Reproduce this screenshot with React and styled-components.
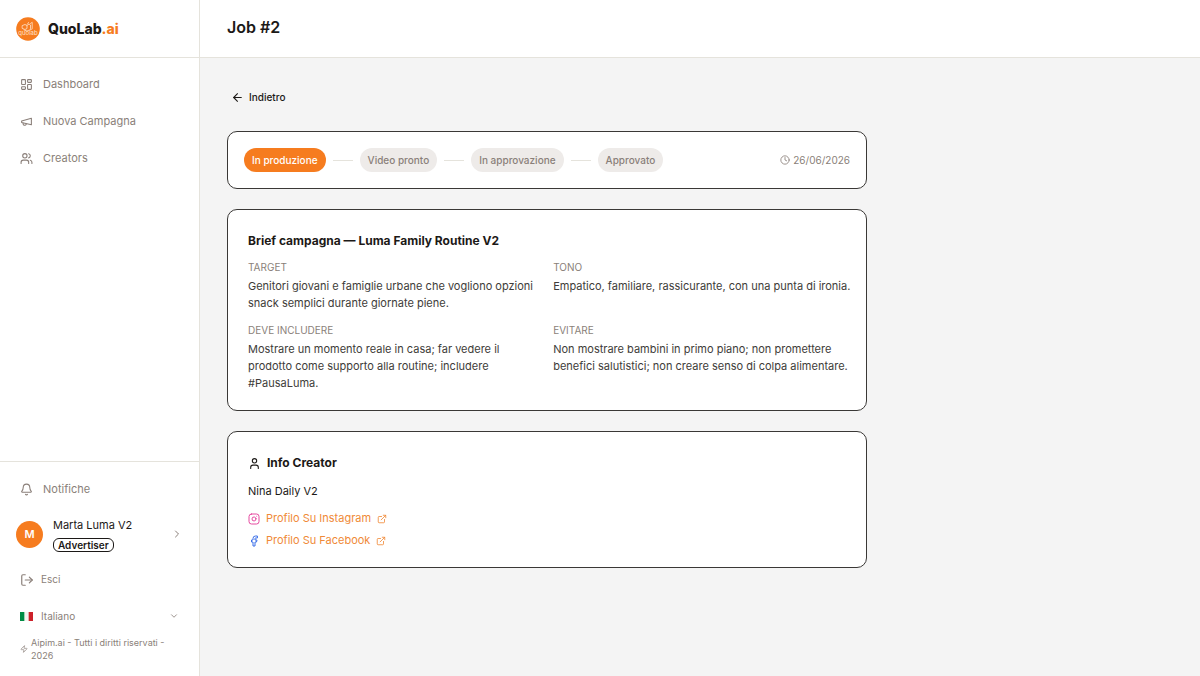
import * as React from 'react';
import styled, { createGlobalStyle } from 'styled-components';
import {
    ArrowLeft,
    Bell,
    ChevronDown,
    ChevronRight,
    Clock,
    ExternalLink,
    Facebook,
    Instagram,
    LayoutDashboard,
    LogOut,
    User,
    Users,
    Zap,
} from 'lucide-react';

const COLOR_ORANGE = '#f67c1f';
const COLOR_LINK = '#f08a38';
const COLOR_INK = '#1c1917';
const COLOR_TEXT = '#403c39';
const COLOR_MUTED = '#8a7f79';
const COLOR_LINE = '#e5e3dc';

const GlobalStyle = createGlobalStyle`
    * {
        box-sizing: border-box;
    }

    body {
        margin: 0;
        background: #f4f4f4;
        color: ${COLOR_INK};
        font-family: Inter, 'Liberation Sans', sans-serif;
        font-size: 11px;
        line-height: 17px;
    }

    h1, h2, h3, p, dl, dd, ol, ul {
        margin: 0;
        padding: 0;
    }

    button, select {
        font: inherit;
        color: inherit;
        background: none;
        border: 0;
        padding: 0;
        cursor: pointer;
    }

    a {
        color: inherit;
        text-decoration: none;
    }

    svg {
        flex: none;
    }
`;

const Page = styled.div`
    display: flex;
    min-height: 100vh;
`;

/* Sidebar */
const Sidebar = styled.aside`
    display: flex;
    flex: none;
    flex-direction: column;
    width: 200px;
    background: #fff;
    border-right: 1px solid ${COLOR_LINE};
    color: ${COLOR_MUTED};
`;

const Brand = styled.a`
    display: flex;
    align-items: center;
    gap: 8px;
    height: 58px;
    padding: 0 16px;
    border-bottom: 1px solid ${COLOR_LINE};
`;

const BrandName = styled.span`
    color: ${COLOR_INK};
    font-size: 14px;
    font-weight: 800;

    em {
        color: ${COLOR_ORANGE};
        font-style: normal;
    }
`;

const Nav = styled.nav`
    display: flex;
    flex: 1;
    flex-direction: column;
    gap: 5px;
    padding: 10px;
`;

const NavLink = styled.a`
    display: flex;
    align-items: center;
    gap: 10px;
    height: 32px;
    padding: 0 10px;
`;

const SidebarFooter = styled.div`
    display: flex;
    flex-direction: column;
    padding: 11px 10px 14px;
    border-top: 1px solid ${COLOR_LINE};
`;

const Account = styled.button`
    display: flex;
    align-items: center;
    gap: 10px;
    height: 58px;
    padding: 0 6px;
    text-align: left;
`;

const Avatar = styled.span`
    display: grid;
    flex: none;
    place-items: center;
    width: 27px;
    height: 27px;
    border-radius: 50%;
    background: ${COLOR_ORANGE};
    color: #fff;
    font-weight: 600;
`;

const AccountText = styled.span`
    display: flex;
    flex: 1;
    flex-direction: column;
    align-items: flex-start;
    gap: 4px;
    color: ${COLOR_INK};
`;

const Role = styled.span`
    padding: 0 4px;
    border: 1px solid ${COLOR_INK};
    border-radius: 6px;
    font-size: 10px;
    font-weight: 600;
    line-height: 12px;
`;

const LogoutButton = styled.button`
    display: flex;
    align-items: center;
    gap: 7px;
    height: 33px;
    padding: 0 10px;
    font-size: 10px;
`;

const Language = styled.label`
    display: flex;
    align-items: center;
    gap: 8px;
    height: 32px;
    margin-top: 4px;
    padding: 0 10px;
    font-size: 10px;

    select {
        flex: 1;
        appearance: none;
    }
`;

const Copyright = styled.p`
    display: flex;
    align-items: center;
    gap: 3px;
    padding: 4px 10px 0;
    font-size: 9px;
    line-height: 13px;
`;

/* Content */
const Main = styled.main`
    flex: 1;
    min-width: 0;
`;

const Header = styled.header`
    display: flex;
    align-items: center;
    height: 58px;
    padding: 0 27px 4px;
    background: #fff;
    border-bottom: 1px solid ${COLOR_LINE};
`;

const PageTitle = styled.h1`
    font-size: 16px;
    font-weight: 600;
    line-height: 24px;
`;

const Content = styled.div`
    display: flex;
    flex-direction: column;
    align-items: flex-start;
    gap: 20px;
    max-width: 694px;
    padding: 26px 27px;
`;

const BackButton = styled.button`
    display: flex;
    align-items: center;
    gap: 5px;
    height: 27px;
    padding: 0 4px;
    font-size: 10px;
    font-weight: 500;
`;

const Card = styled.section`
    width: 100%;
    padding: ${({ $compact }) => ($compact ? '16px' : '20px 12px 18px 20px')};
    background: #fff;
    border: 1px solid #3a3836;
    border-radius: 10px;
`;

const StatusRow = styled.div`
    display: flex;
    align-items: center;
    justify-content: space-between;
    height: 24px;
`;

const Steps = styled.ol`
    display: flex;
    align-items: center;
    list-style: none;
`;

const Step = styled.li`
    display: flex;
    align-items: center;

    & + &::before {
        content: '';
        width: 20px;
        height: 1px;
        margin: 0 7px;
        background: ${COLOR_LINE};
    }
`;

const Pill = styled.span`
    padding: 0 8px;
    border-radius: 12px;
    background: ${({ $active }) => ($active ? COLOR_ORANGE : '#eeebe9')};
    color: ${({ $active }) => ($active ? '#fff' : COLOR_MUTED)};
    font-size: 10px;
    font-weight: 500;
    line-height: 24px;
`;

const DueDate = styled.time`
    display: flex;
    align-items: center;
    gap: 3px;
    color: ${COLOR_MUTED};
    font-size: 10px;
`;

const CardTitle = styled.h2`
    display: flex;
    align-items: center;
    gap: 6px;
    font-size: 12px;
    font-weight: 700;
    line-height: 22px;
`;

const BriefGrid = styled.dl`
    display: grid;
    grid-template-columns: 34fr 35fr;
    gap: 11px 13px;
    padding-top: 8px;
`;

const BriefLabel = styled.dt`
    color: ${COLOR_MUTED};
    font-size: 10px;
    line-height: 15px;
    text-transform: uppercase;
`;

const BriefText = styled.dd`
    padding-top: 3px;
    color: ${COLOR_TEXT};
`;

const CreatorName = styled.p`
    padding: 9px 0 10px;
`;

const SocialList = styled.ul`
    display: flex;
    flex-direction: column;
    gap: 5px;
    list-style: none;

    li {
        display: flex;
    }
`;

const SocialLink = styled.a`
    display: flex;
    align-items: center;
    gap: 6px;
    color: ${COLOR_LINK};
`;

const STEPS = ['In produzione', 'Video pronto', 'In approvazione', 'Approvato'];

const BRIEF = [
    {
        label: 'Target',
        text: 'Genitori giovani e famiglie urbane che vogliono opzioni snack semplici durante giornate piene.',
    },
    { label: 'Tono', text: 'Empatico, familiare, rassicurante, con una punta di ironia.' },
    {
        label: 'Deve includere',
        text: 'Mostrare un momento reale in casa; far vedere il prodotto come supporto alla routine; includere #PausaLuma.',
    },
    {
        label: 'Evitare',
        text: 'Non mostrare bambini in primo piano; non promettere benefici salutistici; non creare senso di colpa alimentare.',
    },
];

function BrandMark() {
    return (
        <svg width="24" height="24" viewBox="0 0 24 24" fill="none" aria-hidden="true">
            <circle cx="12" cy="12" r="11.8" fill={COLOR_ORANGE} />
            <g stroke="#ffe3cb" strokeWidth="0.8" strokeLinecap="round" strokeLinejoin="round">
                <path d="M6.500 8.500l2.500-1 2 1v3l-2 1-2.500-1zM11 8.500l2-1.500 1.500 1v3.500M14.500 6.500l1.700-1.200v6M8 13l3 1 5-2M11.500 7l1-1.500" />
            </g>
            <text
                x="12"
                y="18"
                fill="#ffe3cb"
                fontFamily="Inter, sans-serif"
                fontSize="6"
                textAnchor="middle"
            >
                quolab
            </text>
        </svg>
    );
}

function MegaphoneIcon({ size }) {
    return (
        <svg
            width={size}
            height={size}
            viewBox="0 0 24 24"
            fill="none"
            stroke="currentColor"
            strokeWidth="2"
            strokeLinecap="round"
            strokeLinejoin="round"
            aria-hidden="true"
        >
            <path d="m3 11 18-5v12L3 14v-3z" />
            <path d="M11.6 16.8a3 3 0 1 1-5.8-1.6" />
        </svg>
    );
}

function ItalianFlag() {
    return (
        <svg width="13" height="9" viewBox="0 0 12 9" preserveAspectRatio="none" aria-hidden="true">
            <rect width="12" height="9" fill="#f4f5f0" />
            <rect width="4" height="9" fill="#008c45" />
            <rect x="8" width="4" height="9" fill="#cd212a" />
        </svg>
    );
}

const NAV_ITEMS = [
    { label: 'Dashboard', icon: LayoutDashboard },
    { label: 'Nuova Campagna', icon: MegaphoneIcon },
    { label: 'Creators', icon: Users },
];

export default function App() {
    return (
        <Page>
            <GlobalStyle />
            <Sidebar>
                <Brand href="#">
                    <BrandMark />
                    <BrandName>
                        QuoLab<em>.ai</em>
                    </BrandName>
                </Brand>
                <Nav>
                    {NAV_ITEMS.map(({ label, icon: Icon }) => (
                        <NavLink key={label} href="#">
                            <Icon size={13} />
                            {label}
                        </NavLink>
                    ))}
                </Nav>
                <SidebarFooter>
                    <NavLink href="#">
                        <Bell size={13} />
                        Notifiche
                    </NavLink>
                    <Account type="button">
                        <Avatar>M</Avatar>
                        <AccountText>
                            Marta Luma V2
                            <Role>Advertiser</Role>
                        </AccountText>
                        <ChevronRight size={12} color={COLOR_MUTED} />
                    </Account>
                    <LogoutButton type="button">
                        <LogOut size={14} />
                        Esci
                    </LogoutButton>
                    <Language>
                        <ItalianFlag />
                        <select aria-label="Lingua" defaultValue="it">
                            <option value="it">Italiano</option>
                            <option value="en">English</option>
                        </select>
                        <ChevronDown size={10} />
                    </Language>
                    <Copyright>
                        <Zap size={8} />
                        Aipim.ai - Tutti i diritti riservati - 2026
                    </Copyright>
                </SidebarFooter>
            </Sidebar>
            <Main>
                <Header>
                    <PageTitle>Job #2</PageTitle>
                </Header>
                <Content>
                    <BackButton type="button">
                        <ArrowLeft size={13} />
                        Indietro
                    </BackButton>
                    <Card $compact>
                        <StatusRow>
                            <Steps>
                                {STEPS.map((step, i) => (
                                    <Step key={step}>
                                        <Pill $active={i === 0}>{step}</Pill>
                                    </Step>
                                ))}
                            </Steps>
                            <DueDate dateTime="2026-06-26">
                                <Clock size={10} />
                                26/06/2026
                            </DueDate>
                        </StatusRow>
                    </Card>
                    <Card>
                        <CardTitle>Brief campagna — Luma Family Routine V2</CardTitle>
                        <BriefGrid>
                            {BRIEF.map(({ label, text }) => (
                                <div key={label}>
                                    <BriefLabel>{label}</BriefLabel>
                                    <BriefText>{text}</BriefText>
                                </div>
                            ))}
                        </BriefGrid>
                    </Card>
                    <Card>
                        <CardTitle>
                            <User size={13} />
                            Info Creator
                        </CardTitle>
                        <CreatorName>Nina Daily V2</CreatorName>
                        <SocialList>
                            <li>
                                <SocialLink href="#">
                                    <Instagram size={12} color="#e64aa0" />
                                    Profilo Su Instagram
                                    <ExternalLink size={10} />
                                </SocialLink>
                            </li>
                            <li>
                                <SocialLink href="#">
                                    <Facebook size={12} color="#3b6fe8" />
                                    Profilo Su Facebook
                                    <ExternalLink size={10} />
                                </SocialLink>
                            </li>
                        </SocialList>
                    </Card>
                </Content>
            </Main>
        </Page>
    );
}
